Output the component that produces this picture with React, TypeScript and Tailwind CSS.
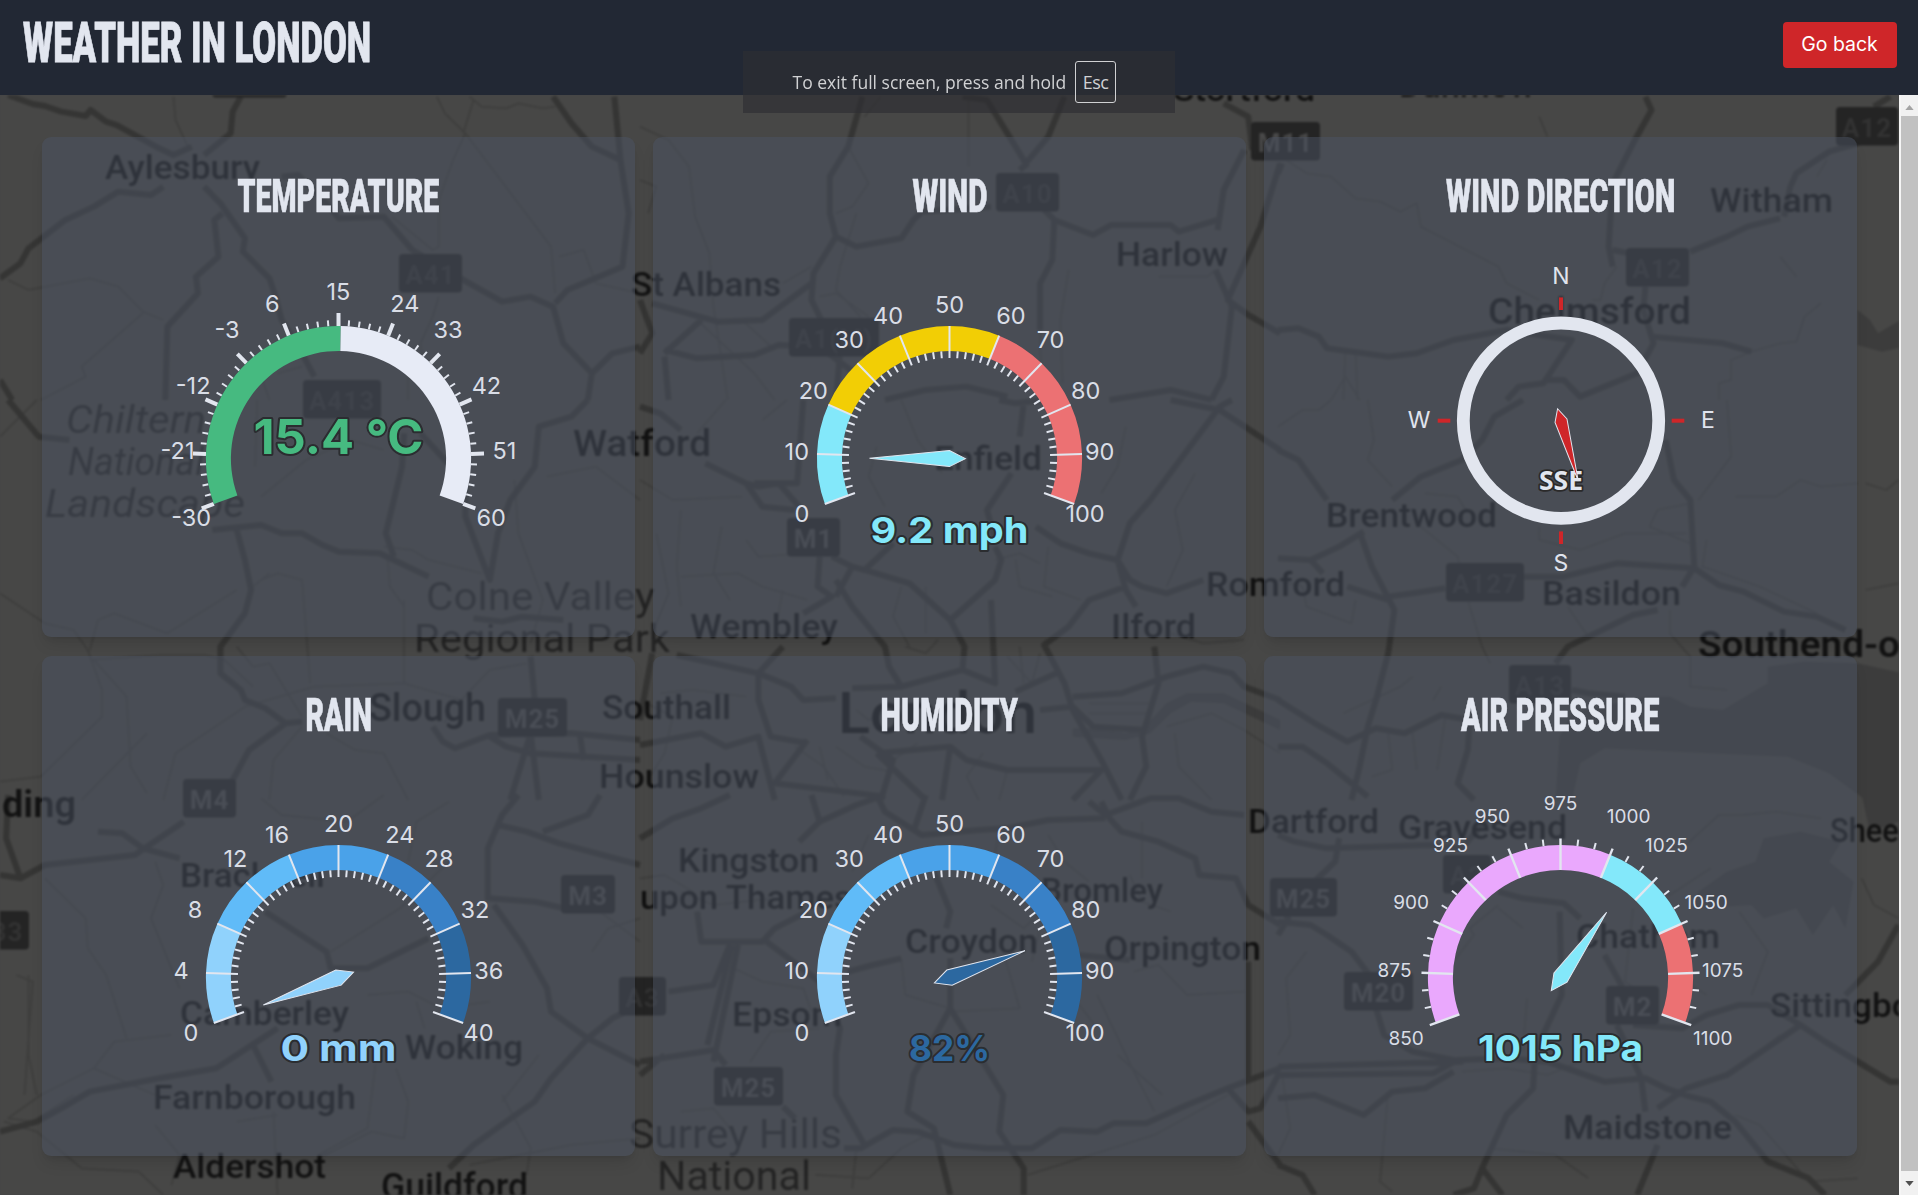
import { useLayoutEffect, useRef, useState } from "react";

/* ---------- Lettering ---------- */

function Condensed({ text, width, className }: { text: string; width: number; className: string }) {
  const ref = useRef<HTMLSpanElement>(null);
  const [scale, setScale] = useState(1);
  useLayoutEffect(() => {
    if (ref.current) setScale(width / ref.current.offsetWidth);
  }, [text, width]);
  return (
    <span ref={ref} className={className} style={{ transform: `scaleX(${scale})` }}>
      {text}
    </span>
  );
}

/* ---------- Map backdrop ---------- */

type Tile = { x: number; y: number; major: string; minor: string; water?: string };

const tiles: Tile[] = [
  {
    x: 0,
    y: 0,
    major:
      "M20 285L80 312L110 318L150 335L210 348L222 330L260 365L285 375L345 415L390 445L425 465L470 440M590 290L570 335L565 400L500 465M500 560L540 610L600 715L595 755L660 835L675 890L690 960L740 1060L770 1130M400 560L370 585L290 575L230 620L160 660L70 745L50 790L0 835M545 640L525 660L535 770L480 830L485 880L410 980L405 1200M690 530L730 525L800 610L830 655L940 650L1010 750L1150 850L1230 905L1300 890L1355 920L1380 1030L1450 1120L1500 1060L1568 1040M1355 290L1400 370L1450 440L1520 480M1505 290L1520 480L1540 640L1525 800L1390 870L1360 910M0 1140L30 1200M1450 1120L1440 1200",
    minor:
      "M425 290L430 360L460 440M1070 290L1090 340L1140 400L1350 740L1360 880M1140 400L1110 480L1075 600L1075 740L1060 750L960 650M1075 890L1060 950L1030 1030L1040 1120M20 840L70 870L220 835L290 860L350 935L400 960M350 940L200 1100L210 1130L100 1200M1150 290L1180 320L1240 325L1270 310L1330 325L1360 320M1160 300L1135 400M1370 770L1430 750L1460 850L1568 880M640 1130L660 1200M1000 1110L1000 1200M680 1120L740 1100",
  },
  {
    x: 640,
    y: 0,
    major:
      "M545 290L510 440L465 530L465 640L480 710L425 820L420 900L460 1000M480 710L530 740L640 715L670 660L690 635L860 620M790 290L850 300L900 400L945 490L1000 410L1040 290M930 510L950 490M990 630L1015 660L1110 705L1155 675L1300 675L1320 695L1415 660M1480 450L1430 570L1415 690M1015 660L1010 780L980 850L980 990M1568 490L1520 680L1440 900L1490 945L1568 1000M1410 810L1450 920L1430 1130L1400 1200M30 910L190 965L300 960L420 850M60 1050L140 1075L280 1065L340 1035L440 1040L580 1170M0 900L30 1000L0 1060M60 1060L150 960M60 1070L70 1200M490 1060L480 1200M600 1200L700 1170L800 1160L900 1190M1150 1200L1300 1170L1400 1200M1430 310L1490 350L1500 450",
    minor:
      "M0 380L70 420L120 500L135 650L170 760L180 920L215 1200M805 300L805 500M530 640L490 800L480 870L540 950M1050 810L1030 960L1035 1150M440 890L480 880L560 950M510 440L560 550L520 620L480 640M0 540L40 560L20 640M140 960L280 1120L330 1200M250 960L330 1050M980 990L985 1200M350 850L420 800M550 350L590 290M1270 830L1390 830L1410 810",
  },
  {
    x: 1278,
    y: 0,
    major:
      "M900 290L915 330L870 430L820 550L810 740L820 800M1230 655L1150 680L1100 710L1010 755M1255 560L1270 520L1350 455L1420 430M1460 320L1500 290M0 990L50 985L100 1010L120 1045L270 1070L340 1060L430 1020L560 990L720 1020L650 1150L590 1160L560 1200M900 860L895 930L920 1030L880 1120L740 1190L700 1140L650 1140M915 1010L1090 1030L1160 1055M820 750L860 760M0 520L10 490M1255 560L1240 650",
    minor:
      "M20 480L70 520L130 530L190 595L250 605L300 635L340 610L350 680L540 800L560 850L640 900M1160 1055L1110 1080L1110 1140L1080 1150L1080 1200M830 800L800 850L790 900L770 900M1160 1055L1230 1030L1270 1025L1290 950L1330 910M1230 770L1270 830M640 350L660 410M160 1200L165 1060M195 1200L190 1060M130 1200L165 1130L200 1200M1320 530L1345 480",
    water: "M1420 930L1450 960L1470 1000L1568 930L1568 1030L1480 1055L1420 1035Z",
  },
  {
    x: 0,
    y: 400,
    major:
      "M20 0L95 110L170 120M520 390L560 385L640 375L690 400L740 400L790 435L830 455L930 460L1050 530M580 390L600 480L615 570L600 640L540 740L540 820L590 870L600 900L650 925L700 970L740 965M700 970L610 1050L570 1140M990 100L985 200L945 400L965 470M1030 100L1090 180L1140 250L1140 350L1200 540L1220 400L1250 300L1310 200L1320 80L1400 50L1440 0M1160 655L1230 665L1280 650L1380 660M1300 770L1310 900L1300 1000L1320 1200M1060 980L1085 1025L1115 1045L1200 1005L1400 1000L1568 1020M1200 1010L1240 1040L1300 1060L1568 1080M1420 1000L1430 1080M1300 1000L1250 1200",
    minor:
      "M0 580L110 670L180 690L215 750L250 870L250 950L100 1130L0 1145M220 750L240 660L280 640L410 700L580 570M220 780L400 765L500 765L550 780L620 860M230 780L310 890L320 1100L360 1180M640 540L680 520L740 540L760 850M580 740L620 800L660 790L700 870L740 950M400 1200L430 1060L600 920L770 860L990 850M990 600L990 850L1130 900M940 440L1010 450L1050 480L1180 520M620 560L660 520M640 290L750 180L860 120L940 150M1260 240L1270 400L1330 600L1300 730M1340 230L1460 200L1568 300M800 1000L870 1050L940 1060L1000 1200M660 1200L670 1080L740 980M1130 900L1200 810L1290 790M630 0L625 200M0 110L90 0M950 480L955 560L990 620M360 1000L200 1200M1100 920L1090 970",
  },
  {
    x: 640,
    y: 400,
    major:
      "M0 20L50 40L100 90M160 190L260 250L300 320L380 330M400 0L385 250L280 250M260 250L290 260L340 250L390 320M440 470L435 560L470 590L400 640M470 470L520 500L550 510L660 550L760 660L870 540L885 480L870 440M520 500L480 590M480 540L520 620L600 740L610 800L640 860M550 510L620 430M880 0L920 10L990 0M940 10L930 110M910 220L850 330L870 420M970 380L1030 430L1100 460L1170 480L1200 370L1250 300L1420 20L1450 0M1300 0L1420 30L1568 150M1170 480L1200 540L1230 560L1290 580L1380 540M1170 480L1190 570L1215 620M1190 560L1100 600L1050 680L990 735L1040 850L1060 930L1130 1080L1180 1200M760 660L795 740L790 810L640 860L520 865M790 810L870 850L860 600M920 875L1020 820M90 765L290 820L350 740M290 820L290 900L320 1010L410 1030M290 820L370 860L400 900L480 895M0 1035L150 1000L210 1040L290 1010L330 1200M1060 890L1180 880L1290 830L1380 800L1450 820L1480 860L1568 900M980 930L1060 920L1110 980L1240 990M1260 740L1270 850L1230 1010L1240 1100L1200 1200M580 1060L760 1040L800 1080L900 1110L1130 1110L1060 1200M760 1040L740 1200M580 1060L700 1200M540 1010L620 1080L590 1200M410 1020L330 1150L600 1190M0 960L30 760",
    minor:
      "M0 240L80 300L250 290M100 330L90 500L100 620M260 420L290 470L400 460M40 400L70 580L30 700M300 60L360 0M210 0L140 100M640 0L680 120L740 220M580 140L560 230L600 320M1050 100L1060 200M1190 80L1170 200L1130 280M1360 220L1310 330L1330 450L1290 560M640 560L620 650L660 740M700 560L700 700M920 480L930 560L1010 590M1000 440L990 560L1080 600M730 720L700 760L650 740M870 480L930 460L980 490M100 530L240 520L300 560L410 600M200 380L180 520L220 600M350 570L330 700M900 770L960 850L980 760M930 740L940 850M1100 940L1240 940M1100 910L1250 910M1290 980L1400 940L1480 990L1568 1060M380 1040L450 1100L500 1190M440 1040L460 1140M480 1040L550 1100L640 1120M620 1080L680 1030M840 1060L800 1130L830 1200M900 1110L880 1200M1310 1000L1320 1100L1400 1200M1300 700L1380 730L1480 720M0 900L80 950L60 1060L20 1140M50 880L130 870L260 890M640 910L560 960L530 930",
    water: "M1060 985L1120 985L1190 1000L1240 975L1290 910L1340 880L1430 880L1568 960L1568 990L1430 910L1350 905L1300 940L1250 1000L1190 1020L1060 1010Z",
  },
  {
    x: 1278,
    y: 400,
    major:
      "M600 0L530 50L500 120L450 180L350 230L280 300M0 150L50 180L120 300M210 395L150 440L80 480L0 475M80 480L110 520M200 395L230 500L285 630L270 760L240 900L220 980L200 1100L180 1200M270 590L330 580L410 565M170 560L270 600M600 530L700 530L830 490L1020 505L1080 555L1140 575L1240 635L1320 650L1390 690M950 120L970 240L1010 300L1020 500L990 560M930 630L870 645L710 740L680 790M0 900L90 970L170 1025L240 985L310 1000L400 945L470 960L465 1050L440 1150L480 1200M720 870L760 880L850 890M0 1040L60 1040L120 1090L220 1190",
    minor:
      "M350 380L440 470L470 620L500 740L520 790M640 380L640 420L740 450L850 400L1000 400M960 630L960 700L1010 770L1010 860L1100 870M1120 290L1220 290L1280 240L1330 260L1420 250M0 80L60 30L100 30L130 0M220 0L235 120L220 180L280 260M360 280L440 290L460 330M1030 300L1110 170L1100 0M910 380L930 330L1010 310M910 380L1010 430M160 940L300 860L330 830M380 900L400 860M0 540L60 560L70 620L180 670L190 600M270 1000L280 1110L230 1130M330 1000L340 1110M410 950L390 1110M1050 420L1040 500L1180 560L1320 640M710 620L760 710M1440 570L1520 550M1440 250L1490 270L1520 240",
    water: "M690 1010L720 940L900 890L960 890L1010 920L1090 930L1200 850L1200 800L1290 785L1420 790L1568 830L1568 1200L1440 1200L1350 1120L1250 1070L1060 1060L800 1045L740 1090L720 1200L680 1200Z",
  },
  {
    x: 0,
    y: 795,
    major:
      "M0 240L50 250L110 210L330 180L450 80M240 110L300 115L350 160L440 190M20 0L15 130L50 250M650 350L800 470L810 520L900 520L1050 430M0 1010L90 980L150 940L220 890L390 850L530 820L680 700M620 750L665 860M1270 0L1230 60L1195 160L1195 310L1310 320L1400 345M1220 90L1290 110L1370 145L1568 210M1330 110L1440 60L1470 0M1210 330L1280 450L1340 580L1350 650L1440 730L1568 810M1440 730L1350 850L1310 920L1240 980L1160 1050L1100 1120M1440 730L1500 670L1568 630",
    minor:
      "M110 250L160 310L210 370L215 460L260 540L310 730M230 820L380 900M420 720L280 740L230 820L100 900L20 970L80 980L180 900M70 540L70 780L90 900M920 810L900 1000L780 1080M1230 900L1300 1060L1290 1140M670 950L680 1200M380 200L400 270L370 370L440 580M810 470L980 340L1100 200M10 980L90 1010L200 1120L340 1130L400 1200M1568 1030L1400 1050L1150 1110M640 10L690 60L850 80L940 0M1000 200L1020 80L1100 20M900 600L1000 590L1080 640L1200 620M1020 620L1040 700M970 820L1000 920L990 1030L910 1010L780 1090M40 540L80 560L60 900M1320 780L1230 920M1450 470L1490 400L1568 370M1470 350L1568 440M580 980L680 960M380 990L440 1080L420 1170",
  },
  {
    x: 640,
    y: 795,
    major:
      "M0 130L80 70L150 40L220 0M420 0L440 80L390 140M440 80L530 30L600 0M580 0L600 50L690 120L830 105L900 100L1000 75L1140 70M700 0L670 110M1130 20L1150 70L1180 110L1270 140L1360 190L1370 240L1460 250L1490 330L1568 390M1100 20L1140 60L1250 10L1320 10L1400 50L1480 60M140 350L150 440L240 440L300 440L330 400L410 350M310 440L440 560L490 700L480 780L480 900L550 1050M240 450L180 800M225 450L165 750M510 530L570 510L640 490M720 230L760 350L750 400M760 490L760 640L670 840L655 950L720 1000L760 1200M760 640L860 840L890 900L880 1010L940 1120L940 1200M500 1060L540 1060L620 1005L680 1010L770 1050L850 1060L960 1060L1030 1005L1120 1010L1160 985L1240 985L1340 930L1440 880L1568 820M0 800L180 765L210 810M70 590L180 570L210 480L220 450M1070 480L1200 495M1490 500L1490 860M1440 880L1490 950L1520 940L1568 830M350 935L380 970M1490 980L1568 1110M0 840L60 780",
    minor:
      "M1210 530L1270 510L1340 600L1480 590M1120 600L1210 830L1260 950M950 1140L1260 1020L1440 900M430 1140L560 1150L640 1060L720 1010M230 520L300 560L400 580L420 650M270 800L320 710L440 700M100 290L180 330L330 310M860 330L940 400L1000 330M1000 120L1040 200L1100 260M1200 240L1230 320L1300 350M880 430L930 640L760 650M1060 500L1070 620L1120 700M640 490L650 600L760 640M500 300L480 330M560 120L520 230M0 250L60 240L130 290M100 950L180 940L220 1000M1170 780L1280 900M960 500L980 400M530 1060L520 1180M880 100L860 250M1230 80L1230 250",
  },
  {
    x: 1278,
    y: 795,
    major:
      "M0 380L80 390L120 420L180 470L230 550M0 120L40 140L120 160L370 150L450 160L520 60M150 130L140 200L80 270M540 290L600 310L700 325L740 370M800 480L850 590M690 350L695 600L630 770L625 880L560 960L500 1120L480 1180L430 1200M240 640L260 720L330 770L450 800L0 815M0 840L380 835L440 795L560 790L660 800L800 860L900 850L950 880L1010 905L1060 920L1120 980L1200 1100L1300 1150L1340 1200M870 690L990 700L1050 660L1130 630L1200 630L1280 690L1340 740L1420 800L1500 860L1568 860M1390 600L1470 500L1520 390M930 940L1000 880L1100 840L1280 690M0 910L90 900L210 960L280 890L360 880L430 830M930 1050L880 1200M830 690L890 850L900 950M500 1120L550 1200M0 1110L60 1140L90 1200M0 320L25 370L0 420",
    minor:
      "M70 470L20 550L30 720L0 780M430 500L480 420L470 400L540 330M450 830L560 820L660 840L740 800M1060 220L960 300L850 290M990 160L1080 60L1140 60L1220 50L1330 70M870 340L850 560L900 600M920 380L1000 560L1050 600M270 890L250 1160L280 1190M10 840L30 1000L0 1080M520 1060L680 1080L760 1150M1120 960L1180 990L1300 1160L1420 1150M600 400L540 340M1430 250L1460 330L1520 370M1230 720L1150 800M1130 350L1200 470L1160 600M610 610L600 770",
    water:
      "M1030 290L1100 230L1170 200L1190 130L1280 110L1380 140L1350 200L1410 260L1390 400L1360 330L1310 420L1270 340L1190 370L1160 330L1020 340ZM1430 0L1568 0L1568 60L1450 110Z",
  },
];

type Place = [text: string, x: number, y: number, width: number, size: number, tone?: "soft" | "bold" | "italic"];

const places: Place[] = [
  ["Stortford", 1173, 101, 142, 34],
  ["Dunmow", 1399, 97, 136, 32],
  ["Aylesbury", 105, 179, 155, 34],
  ["Witham", 1710, 212, 123, 34],
  ["Harlow", 1116, 266, 112, 34],
  ["St Albans", 631, 296, 150, 34],
  ["Chelmsford", 1488, 324, 203, 37],
  ["Chiltern", 66, 433, 140, 38, "italic"],
  ["National", 68, 475, 136, 38, "italic"],
  ["Landscape", 45, 517, 200, 38, "italic"],
  ["Watford", 573, 456, 138, 37],
  ["Enfield", 934, 470, 108, 34],
  ["Brentwood", 1326, 527, 171, 34],
  ["Romford", 1206, 596, 139, 34],
  ["Basildon", 1542, 605, 139, 34],
  ["Colne Valley", 426, 610, 229, 38, "soft"],
  ["Regional Park", 414, 652, 256, 38, "soft"],
  ["Wembley", 690, 638, 148, 34],
  ["Ilford", 1111, 638, 85, 34],
  ["Southend-o", 1698, 657, 202, 37, "bold"],
  ["Slough", 369, 721, 117, 38],
  ["Southall", 602, 719, 129, 34],
  ["London", 838, 733, 199, 58],
  ["Hounslow", 599, 788, 160, 34],
  ["ding", 2, 817, 74, 37, "bold"],
  ["Dartford", 1248, 833, 131, 34],
  ["Gravesend", 1398, 839, 169, 34],
  ["Sheerness", 1830, 842, 145, 34],
  ["Kingston", 678, 872, 141, 34],
  ["Bracknell", 180, 887, 145, 34],
  ["Bromley", 1041, 902, 122, 34],
  ["upon Thames", 640, 909, 212, 34],
  ["Chatham", 1576, 948, 144, 34],
  ["Croydon", 905, 953, 133, 34],
  ["Orpington", 1104, 960, 157, 34],
  ["Sittingbourne", 1770, 1017, 212, 34],
  ["Camberley", 180, 1025, 169, 34],
  ["Epsom", 732, 1026, 110, 34],
  ["Woking", 405, 1059, 118, 34],
  ["Farnborough", 153, 1109, 203, 34],
  ["Maidstone", 1563, 1139, 169, 34],
  ["Surrey Hills", 629, 1148, 213, 40, "soft"],
  ["Aldershot", 173, 1178, 153, 34],
  ["National", 657, 1190, 154, 40, "soft"],
  ["Guildford", 381, 1199, 147, 36],
];

const badges: [string, number, number, number][] = [
  ["A41", 212, 59, 75],
  ["M11", 1251, 122, 69],
  ["A12", 1836, 107, 62],
  ["A10", 996, 173, 63],
  ["A12", 1626, 248, 63],
  ["A41", 399, 254, 63],
  ["A1(M)", 789, 318, 90],
  ["A413", 303, 380, 78],
  ["M1", 787, 518, 53],
  ["A127", 1446, 563, 78],
  ["A13", 1509, 665, 62],
  ["M25", 498, 698, 69],
  ["M4", 183, 779, 53],
  ["A2", 1443, 855, 48],
  ["M3", 561, 875, 54],
  ["M25", 1270, 878, 67],
  ["33", -14, 911, 43],
  ["M20", 1344, 972, 69],
  ["A3", 619, 977, 47],
  ["M2", 1606, 986, 53],
  ["M25", 714, 1067, 69],
];

function MapBackdrop() {
  return (
    <svg viewBox="0 95 1899 1100" className="absolute inset-0 h-full w-full blur-[0.8px]" fontFamily="Roboto, sans-serif">
      <rect x="0" y="95" width="1899" height="1100" fill="#474746" />
      {tiles.map((t) => (
        <g key={`${t.x}-${t.y}`} transform={`translate(${t.x} ${t.y}) scale(0.4082 0.3333)`} fill="none" strokeLinejoin="round">
          {t.water && <path d={t.water} fill="#3c3c3c" />}
          <path d={t.minor} stroke="#3e3e3d" strokeWidth="1.8" vectorEffect="non-scaling-stroke" />
          <path d={t.major} stroke="#353534" strokeWidth="6" vectorEffect="non-scaling-stroke" />
        </g>
      ))}
      {badges.map(([name, x, y, w]) => (
        <g key={`${name}-${x}`}>
          <rect x={x} y={y} width={w} height="38.5" rx="4" fill="#242424" />
          <text
            x={x + w / 2}
            y={y + 29.5}
            textAnchor="middle"
            fontSize="26"
            fontWeight="700"
            letterSpacing="1"
            fill={name[0] === "M" ? "#484848" : "#323232"}
          >
            {name}
          </text>
        </g>
      ))}
      {places.map(([name, x, y, w, size, tone]) => (
        <text
          key={`${name}-${y}`}
          x={x}
          y={y}
          textLength={w}
          lengthAdjust="spacingAndGlyphs"
          fontSize={size}
          fontStyle={tone === "italic" ? "italic" : "normal"}
          fontWeight={tone === "bold" ? 600 : tone ? 400 : 500}
          fill={tone === "soft" || tone === "italic" ? "#242424" : "#121212"}
        >
          {name}
        </text>
      ))}
    </svg>
  );
}

/* ---------- Gauges ---------- */

const CX = 296.5;
const CY = 321.6;
const R = 132.6;
const RING = 25;
const INK = "#e2e6ef";

const rad = (deg: number) => (deg * Math.PI) / 180;
const at = (deg: number, r: number): [number, number] => [CX + r * Math.cos(rad(deg)), CY - r * Math.sin(rad(deg))];
const angleOf = (f: number) => 200 - 220 * f;

function arc(from: number, to: number) {
  const a = angleOf(from);
  const b = angleOf(to);
  const large = a - b > 180 ? 1 : 0;
  const [x1, y1] = at(a, R);
  const [x2, y2] = at(b, R);
  const [x3, y3] = at(b, R - RING);
  const [x4, y4] = at(a, R - RING);
  return `M${x1} ${y1}A${R} ${R} 0 ${large} 1 ${x2} ${y2}L${x3} ${y3}A${R - RING} ${R - RING} 0 ${large} 0 ${x4} ${y4}Z`;
}

function Tick({ deg, r1, r2, w }: { deg: number; r1: number; r2: number; w: number }) {
  const [x1, y1] = at(deg, r1);
  const [x2, y2] = at(deg, r2);
  return <line x1={x1} y1={y1} x2={x2} y2={y2} stroke={INK} strokeWidth={w} />;
}

type GaugeProps = {
  bands: [number, string][];
  labels: string[];
  labelRadius: number;
  labelSize?: number;
  subdivisions: number;
  major: [number, number, number];
  minor: [number, number, number];
  ticksBelow?: boolean;
  needle?: { at: number; color: string };
  value: { text: string; y: number; size: number; width: number; color: string };
};

function Gauge({ bands, labels, labelRadius, labelSize = 23.5, subdivisions, major, minor, ticksBelow, needle, value }: GaugeProps) {
  const segments = labels.length - 1;
  const steps = Array.from({ length: segments * subdivisions + 1 }, (_, i) => i);
  const ticks = steps.map((i) => {
    const [r1, r2, w] = i % subdivisions === 0 ? major : minor;
    return <Tick key={i} deg={angleOf(i / (segments * subdivisions))} r1={r1} r2={r2} w={w} />;
  });
  return (
    <svg viewBox="0 90 593 410" className="h-[410px] w-[593px]" fontFamily="Inter, sans-serif">
      {ticksBelow && ticks}
      {bands.map(([end, color], i) => (
        <path key={end} d={arc(i === 0 ? 0 : bands[i - 1][0], end)} fill={color} />
      ))}
      {!ticksBelow && ticks}
      {labels.map((label, i) => {
        const deg = angleOf(i / segments);
        const [x, y] = at(deg, labelRadius);
        const ux = Math.cos(rad(deg));
        const uy = Math.sin(rad(deg));
        const center = uy > 0.8 ? y + labelSize * 0.42 - 0.5 : y - 1.5;
        return (
          <text
            key={label}
            x={ux < -0.4 ? x - 1 : ux > 0.4 ? x + 1 : x}
            y={center + labelSize * 0.364}
            textAnchor={ux < -0.4 ? "start" : ux > 0.4 ? "end" : "middle"}
            fontSize={labelSize}
            fill="#d9dde6"
          >
            {label}
          </text>
        );
      })}
      <text
        x={CX}
        y={value.y}
        textAnchor="middle"
        fontSize={value.size}
        fontWeight="700"
        textLength={value.width}
        lengthAdjust="spacingAndGlyphs"
        fill={value.color}
        stroke="#2b2d30"
        strokeWidth="4"
        strokeLinejoin="round"
        paintOrder="stroke"
      >
        {value.text}
      </text>
      {needle && (
        <path
          d={`M-16 0L0 -8L80 0L0 8Z`}
          transform={`translate(${CX} ${CY}) rotate(${-angleOf(needle.at)})`}
          fill={needle.color}
          stroke={INK}
          strokeWidth="1"
        />
      )}
    </svg>
  );
}

function Compass() {
  const cx = 297;
  const cy = 283.7;
  return (
    <svg viewBox="0 90 593 410" className="h-[410px] w-[593px]" fontFamily="Inter, sans-serif">
      <circle cx={cx} cy={cy} r="97.7" fill="none" stroke={INK} strokeWidth="12.8" />
      {[0, 90, 180, 270].map((d) => (
        <rect key={d} x={cx + 110.7} y={cy - 2} width="12.6" height="4" fill="#cf2629" transform={`rotate(${d} ${cx} ${cy})`} />
      ))}
      <g fontSize="23" fill="#e0e4ee" textAnchor="middle">
        <text x={cx} y="147">N</text>
        <text x={cx} y="434">S</text>
        <text x="155" y="290.5">W</text>
        <text x="444" y="290.5">E</text>
      </g>
      <text
        x={cx}
        y="352.5"
        textAnchor="middle"
        fontFamily="'Noto Sans', 'Open Sans', sans-serif"
        fontSize="26"
        fontWeight="700"
        textLength="44"
        lengthAdjust="spacingAndGlyphs"
        fill={INK}
        stroke="#2b2a2a"
        strokeWidth="3.6"
        strokeLinejoin="round"
        paintOrder="stroke"
      >
        SSE
      </text>
      <path
        d="M-12.4 0L0 -6.2L62.7 0L0 6.2Z"
        transform={`translate(${cx} ${cy}) rotate(74)`}
        fill="#cf2629"
        stroke={INK}
        strokeWidth="1"
      />
    </svg>
  );
}

/* ---------- Cards ---------- */

const range = (from: number, step: number) => Array.from({ length: 11 }, (_, i) => String(from + i * step));

const blues: [number, string][] = [
  [0.2, "#90d2fc"],
  [0.4, "#60bbf8"],
  [0.6, "#4aa2e9"],
  [0.8, "#3981c7"],
  [1, "#2c68a0"],
];

function Card({ title, width, children }: { title: string; width: number; children: React.ReactNode }) {
  return (
    <section className="flex flex-col items-center rounded-[9px] bg-[#4b5464]/50 shadow-lg">
      <h2 className="flex h-[90px] items-end justify-center">
        <Condensed
          text={title}
          width={width}
          className="mb-[-1.5px] inline-block h-[65px] font-['Roboto'] text-[46px] leading-[65px] font-black whitespace-nowrap text-[#e2e6ef] uppercase [-webkit-text-stroke:0.6px_#e2e6ef]"
        />
      </h2>
      {children}
    </section>
  );
}

export default function App() {
  return (
    <div className="relative flex h-[1195px] w-[1918px] flex-col overflow-hidden bg-[#474746]">
      <header className="flex h-[95px] shrink-0 items-start justify-between bg-[#222834] pr-[21px] pl-[23px]">
        <h1 className="mt-[8px]">
          <Condensed
            text="Weather in London"
            width={348}
            className="inline-block origin-left font-['Roboto'] text-[56px] leading-[70px] font-black whitespace-nowrap text-[#e2e6ef] uppercase [-webkit-text-stroke:0.8px_#e2e6ef]"
          />
        </h1>
        <button className="mt-[22px] h-[46px] w-[114px] rounded bg-[#cf2629] pr-[1px] font-['Inter'] text-[19.5px] font-normal text-white">
          Go back
        </button>
      </header>

      <div className="flex min-h-0 flex-1">
        <main className="relative w-[1899px] overflow-hidden">
          <MapBackdrop />
          <div className="relative mt-[42px] ml-[42px] grid w-[1815px] grid-cols-3 grid-rows-[500px_500px] gap-x-[18px] gap-y-[19px]">
            <Card title="Temperature" width={202}>
              <Gauge
                bands={[
                  [0.5044, "#46ba80"],
                  [1, "#e7ebf6"],
                ]}
                labels={range(-30, 9)}
                labelRadius={177}
                subdivisions={5}
                major={[R, R + 13, 4]}
                minor={[R, R + 6, 2]}
                ticksBelow
                value={{ text: "15.4 °C", y: 316.5, size: 48, width: 170, color: "#46ba80" }}
              />
            </Card>
            <Card title="Wind" width={75}>
              <Gauge
                bands={[
                  [0.2, "#83e8fa"],
                  [0.6, "#f2ce05"],
                  [1, "#ec7173"],
                ]}
                labels={range(0, 10)}
                labelRadius={164}
                subdivisions={5}
                major={[R, R - 32, 2]}
                minor={[R - RING, R - RING - 7, 2]}
                needle={{ at: 0.092, color: "#83e8fa" }}
                value={{ text: "9.2 mph", y: 405.5, size: 36, width: 158, color: "#83e8fa" }}
              />
            </Card>
            <Card title="Wind direction" width={229}>
              <Compass />
            </Card>
            <Card title="Rain" width={67}>
              <Gauge
                bands={blues}
                labels={range(0, 4)}
                labelRadius={164}
                subdivisions={5}
                major={[R, R - 32, 2]}
                minor={[R - RING, R - RING - 7, 2]}
                needle={{ at: 0, color: "#90d2fc" }}
                value={{ text: "0 mm", y: 405, size: 36, width: 116, color: "#90d2fc" }}
              />
            </Card>
            <Card title="Humidity" width={137}>
              <Gauge
                bands={blues}
                labels={range(0, 10)}
                labelRadius={164}
                subdivisions={5}
                major={[R, R - 32, 2]}
                minor={[R - RING, R - RING - 7, 2]}
                needle={{ at: 0.82, color: "#2c68a0" }}
                value={{ text: "82%", y: 405, size: 36, width: 81, color: "#2c68a0" }}
              />
            </Card>
            <Card title="Air pressure" width={198}>
              <Gauge
                bands={[
                  [0.6, "#eaa8fd"],
                  [0.8, "#83e8fa"],
                  [1, "#ec7173"],
                ]}
                labels={range(850, 25)}
                labelRadius={182}
                labelSize={19}
                subdivisions={3}
                major={[R + 6.5, R - RING, 2.4]}
                minor={[R + 6.5, R, 2]}
                needle={{ at: 0.66, color: "#83e8fa" }}
                value={{ text: "1015 hPa", y: 405, size: 36, width: 165, color: "#83e8fa" }}
              />
            </Card>
          </div>
        </main>

        <div className="flex flex-1 flex-col items-center border-l-2 border-[#f5f5f5] bg-[#f1f1f1]">
          <div className="flex h-[21px] items-center justify-center">
            <svg viewBox="0 0 10 6" className="mt-[3px] h-[5px] w-[9px]">
              <path d="M5 0L10 6H0Z" fill="#a3a3a3" />
            </svg>
          </div>
          <div className="w-full flex-1 bg-[#c1c1c1]" />
          <div className="flex h-[24px] items-center justify-center">
            <svg viewBox="0 0 10 6" className="h-[5px] w-[9px]">
              <path d="M0 0H10L5 6Z" fill="#505050" />
            </svg>
          </div>
        </div>
      </div>

      <div className="absolute top-[51px] left-[743px] flex h-[62px] w-[432px] items-center justify-center gap-[9px] bg-[#2e2e32]/65 text-[#d0d1d3]">
        <span className="flex w-[274px] justify-center">
          <Condensed
            text="To exit full screen, press and hold"
            width={274}
            className="inline-block font-['Open_Sans'] text-[19px] leading-[42px] whitespace-nowrap"
          />
        </span>
        <kbd className="mr-[10px] flex h-[42px] w-[41px] items-center justify-center rounded-[3px] border border-[#d0d1d3] font-['Open_Sans'] text-[18px] tracking-[-0.5px]">
          Esc
        </kbd>
      </div>
    </div>
  );
}
